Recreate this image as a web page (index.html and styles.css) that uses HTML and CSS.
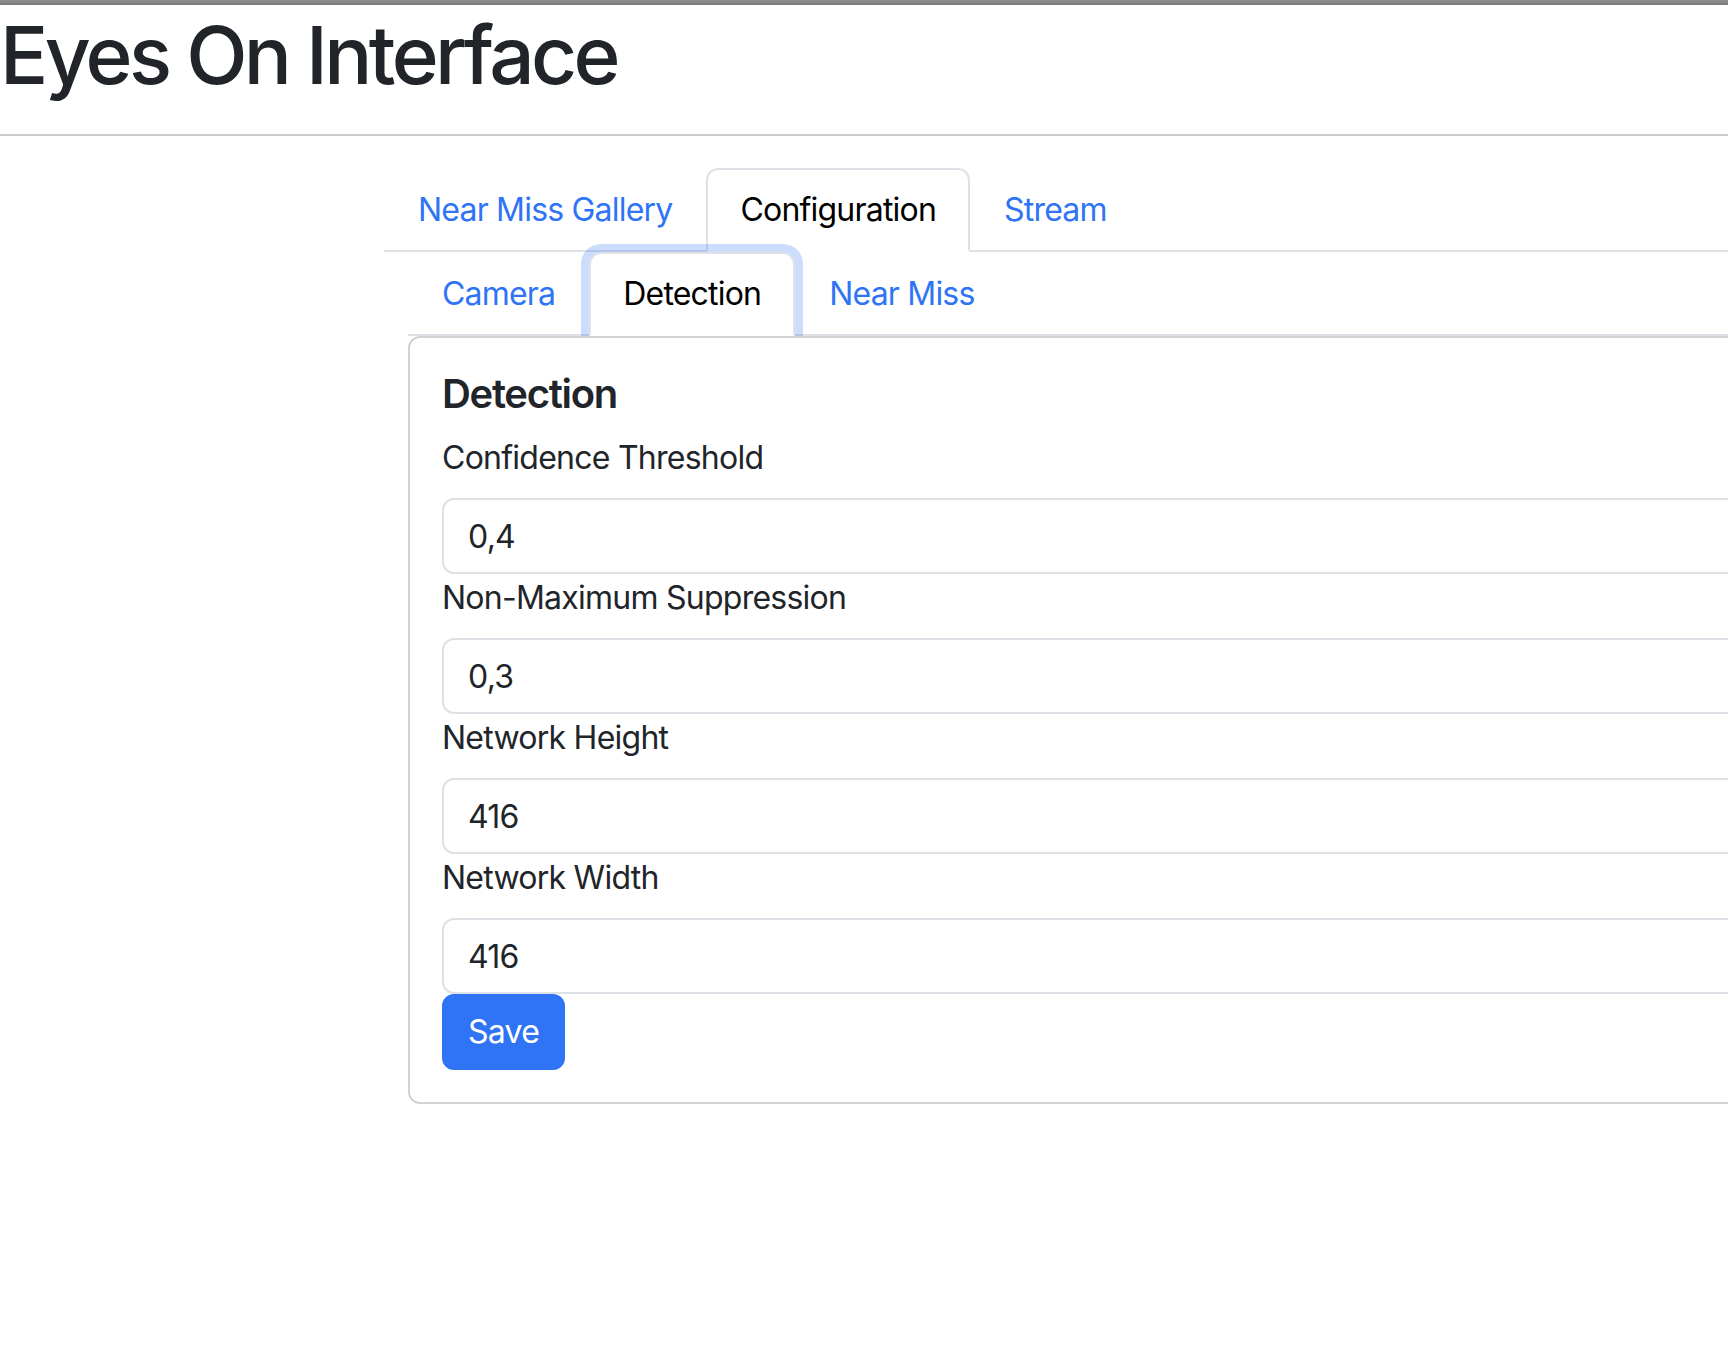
FILE: index.html
```html
<!DOCTYPE html>
<html lang="en">
<head>
<meta charset="utf-8">
<title>Eyes On Interface</title>
<link rel="stylesheet" href="styles.css">
</head>
<body>
<div class="topbar"></div>
<header class="site-header">
  <h1 class="site-title">Eyes On Interface</h1>
</header>
<main class="layout">
  <ul class="tabs">
    <li class="tab-item"><a class="tab-link" href="#">Near Miss Gallery</a></li>
    <li class="tab-item"><a class="tab-link active" href="#">Configuration</a></li>
    <li class="tab-item"><a class="tab-link" href="#">Stream</a></li>
  </ul>
  <div class="tab-pane">
    <ul class="tabs">
      <li class="tab-item"><a class="tab-link" href="#">Camera</a></li>
      <li class="tab-item"><a class="tab-link active focused" href="#">Detection</a></li>
      <li class="tab-item"><a class="tab-link" href="#">Near Miss</a></li>
    </ul>
    <div class="card">
      <div class="card-body">
        <h5 class="card-title">Detection</h5>
        <form class="form">
          <label class="form-label">Confidence Threshold</label>
          <input class="form-control" type="text" value="0,4">
          <label class="form-label">Non-Maximum Suppression</label>
          <input class="form-control" type="text" value="0,3">
          <label class="form-label">Network Height</label>
          <input class="form-control" type="text" value="416">
          <label class="form-label">Network Width</label>
          <input class="form-control" type="text" value="416">
          <div><button class="btn-primary" type="button">Save</button></div>
        </form>
      </div>
    </div>
  </div>
</main>
</body>
</html>
```

FILE: styles.css
```css
* { box-sizing: border-box; }
html, body { margin: 0; padding: 0; }
body {
  font-family: Inter, "Liberation Sans", sans-serif;
  color: #212529;
  background: #fff;
  overflow: hidden;
  width: 1728px;
  height: 1346px;
}
.topbar {
  height: 5px;
  background: linear-gradient(#909090, #7c7c7c);
}
.site-header {
  padding: 2px 0 31px 0;
  border-bottom: 2px solid #cccccc;
}
.site-title {
  margin: 0;
  font-size: 80px;
  line-height: 96px;
  font-weight: 500;
  letter-spacing: -3.6px;
}
.layout {
  margin-left: 384px;
  padding-top: 32px;
  width: 1600px;
}
.tabs {
  list-style: none;
  margin: 0;
  padding: 0;
  display: flex;
  border-bottom: 2px solid #dee2e6;
}
.tab-item { margin-bottom: -2px; }
.tab-link {
  display: block;
  padding: 16px 32px;
  font-size: 32px;
  line-height: 48px;
  letter-spacing: -0.8px;
  color: #2f74f5;
  text-decoration: none;
  border: 2px solid transparent;
  border-radius: 12px 12px 0 0;
}
.tab-link.active {
  color: #000;
  background: #fff;
  border-color: #dee2e6 #dee2e6 #fff;
}
.tab-link.focused {
  box-shadow: 0 0 0 8px rgba(47, 116, 245, 0.25);
}
.tab-pane { padding-left: 24px; }
.card {
  position: relative;
  background: #fff;
  border: 2px solid #d3d3d3;
  border-radius: 12px;
}
.card-body { padding: 32px; }
.card-title {
  margin: 0 0 16px 0;
  font-size: 40px;
  line-height: 48px;
  font-weight: 600;
  letter-spacing: -1.3px;
}
.form { display: flex; flex-direction: column; }
.form-label {
  display: block;
  font-size: 32px;
  line-height: 48px;
  letter-spacing: -0.75px;
  margin-bottom: 16px;
}
.form-control {
  display: block;
  width: 100%;
  height: 76px;
  padding: 12px 24px;
  font-family: inherit;
  font-size: 32px;
  line-height: 48px;
  letter-spacing: -0.75px;
  color: #212529;
  background: #fff;
  border: 2px solid #dee2e6;
  border-radius: 12px;
  outline: none;
}
.btn-primary {
  display: inline-block;
  height: 76px;
  padding: 12px 24px;
  font-family: inherit;
  font-size: 32px;
  line-height: 48px;
  letter-spacing: -0.75px;
  color: #fff;
  background: #2f74f5;
  border: 2px solid #2f74f5;
  border-radius: 12px;
  cursor: pointer;
}
```
